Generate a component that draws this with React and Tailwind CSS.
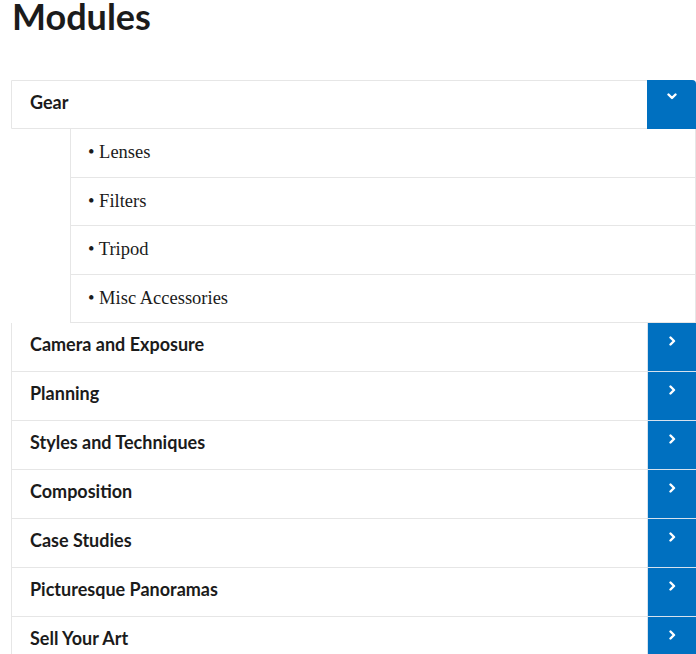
const subItems = ['Lenses', 'Filters', 'Tripod', 'Misc Accessories']

const modules = [
  'Camera and Exposure',
  'Planning',
  'Styles and Techniques',
  'Composition',
  'Case Studies',
  'Picturesque Panoramas',
  'Sell Your Art',
]

function ChevronDown() {
  return (
    <svg width="10" height="7" viewBox="0 0 10 7" fill="none">
      <polyline points="1.5,1.5 5,5 8.5,1.5" stroke="white" strokeWidth="2.4" strokeLinecap="round" strokeLinejoin="round" />
    </svg>
  )
}

function ChevronRight() {
  return (
    <svg width="7" height="10" viewBox="0 0 7 10" fill="none">
      <polyline points="1.5,1.5 5,5 1.5,8.5" stroke="white" strokeWidth="2.4" strokeLinecap="round" strokeLinejoin="round" />
    </svg>
  )
}

export default function App() {
  return (
    <div className="w-[696px] h-[654px] overflow-hidden bg-white text-[#1b1b1b]" style={{ fontFamily: 'Lato, "Liberation Sans", sans-serif' }}>
      <h1 className="pl-[12px] text-[36px] leading-[32px] font-bold mb-[48px]">Modules</h1>

      <div className="ml-[11px]">
        {/* open item */}
        <div className="flex h-[49px] border border-[#e6e6e6] rounded-tr-[4px]">
          <div className="flex-1 pl-[18px] pt-[9px] text-[18px] leading-[24px] font-bold">Gear</div>
          <div className="w-[49px] -mt-px -mr-px -mb-px bg-[#0070c0] rounded-tr-[4px] flex justify-center pt-[13px]">
            <ChevronDown />
          </div>
        </div>
        <div className="ml-[59px] border-l border-r border-[#e6e6e6]">
          {subItems.map(item => (
            <div key={item} className="h-[48.5px] border-b border-[#e6e6e6] pl-[17px] pt-[11px] text-[18.5px] leading-[24px]" style={{ fontFamily: '"Liberation Serif", serif' }}>
              • {item}
            </div>
          ))}
        </div>

        {modules.map(name => (
          <div key={name} className="flex h-[49px] border-l border-b border-[#e6e6e6]">
            <div className="flex-1 pl-[18px] pt-[9px] text-[18px] leading-[24px] font-bold">{name}</div>
            <div className="w-[49px] -mb-px bg-[#0070c0] border-l border-b border-[#d6e2ee] flex justify-center pt-[13px]">
              <ChevronRight />
            </div>
          </div>
        ))}
      </div>
    </div>
  )
}
